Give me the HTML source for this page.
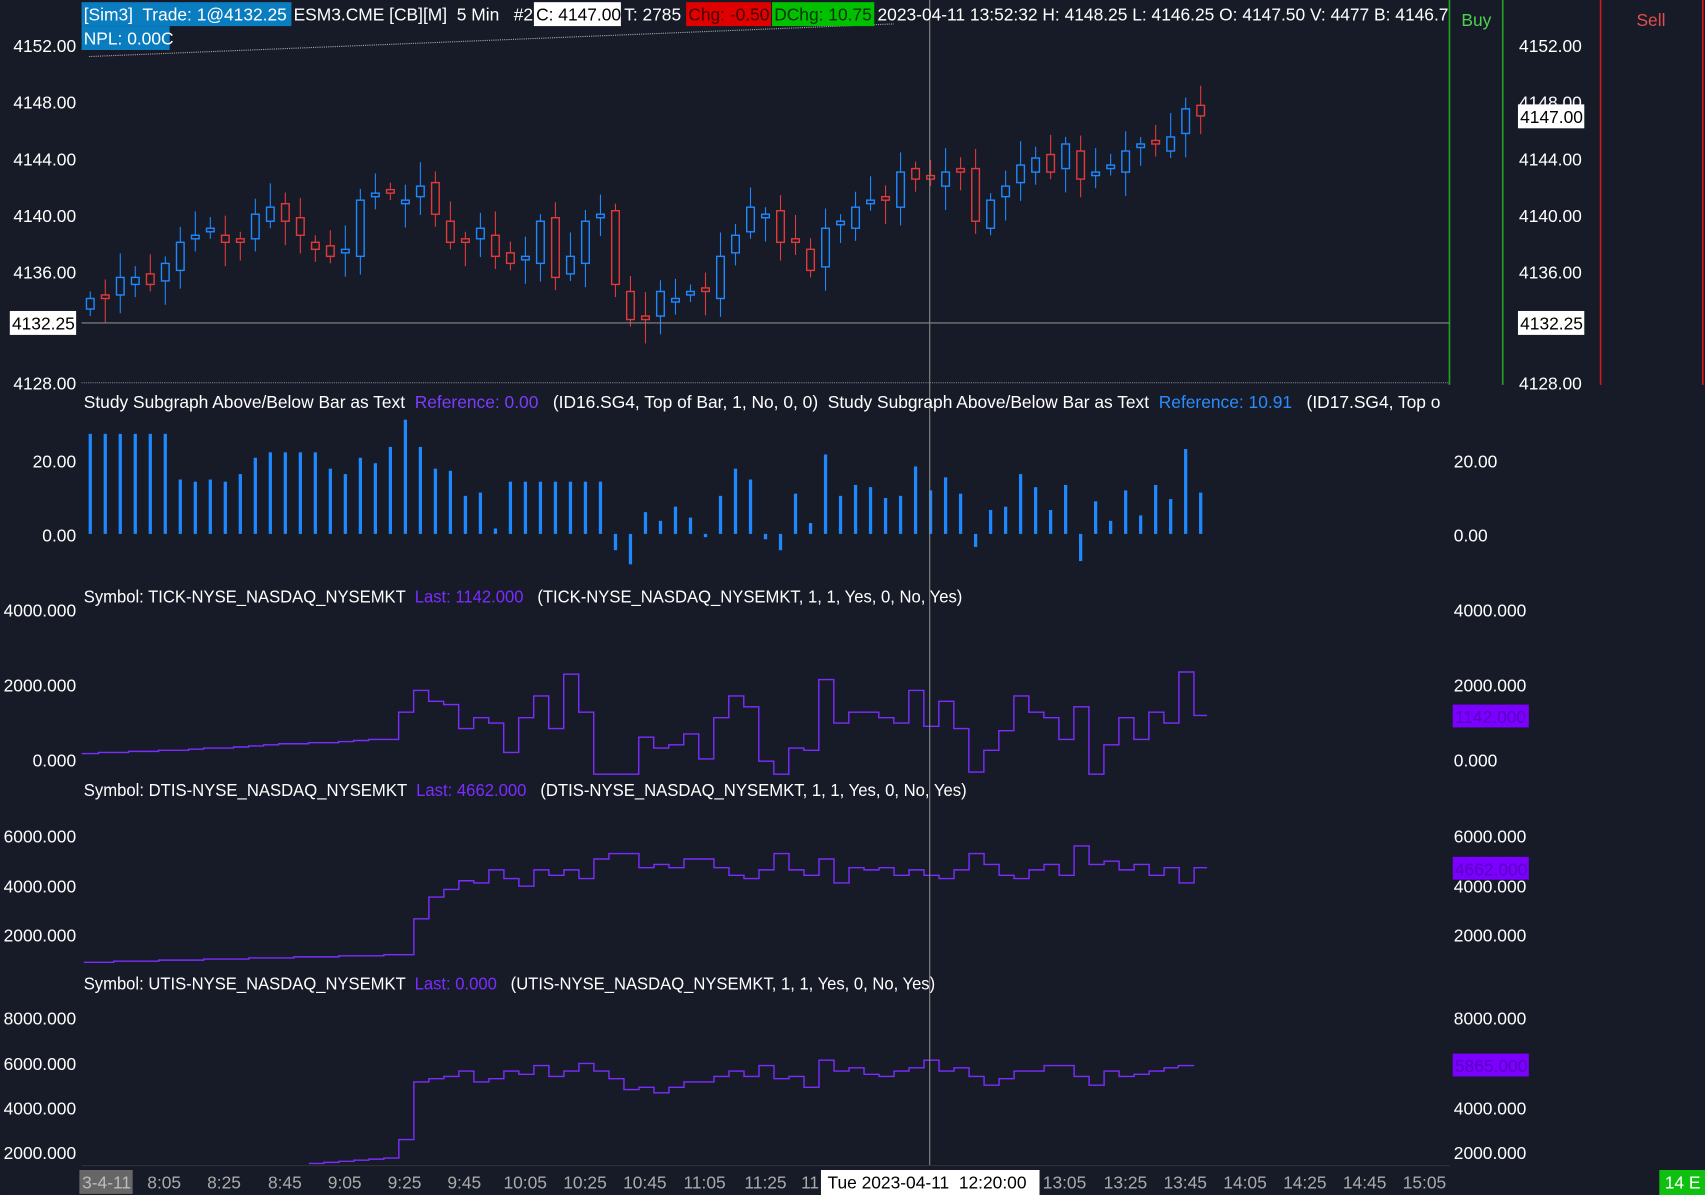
<!DOCTYPE html>
<html><head><meta charset="utf-8"><style>
html,body{margin:0;padding:0;background:#171b27;overflow:hidden}
svg{display:block}
text{font-family:"Liberation Sans",sans-serif;font-size:16px;fill:#fff}
.p{white-space:pre}
</style></head><body>
<svg id="s" width="1705" height="1195" viewBox="0 0 1568 1099" xmlns="http://www.w3.org/2000/svg">
<rect width="1568" height="1099" fill="#171b27"/>
<defs><clipPath id="cp"><rect x="75" y="0" width="1258" height="1072"/></clipPath></defs>
<g id="g" clip-path="url(#cp)"></g>
<line x1="75" y1="352" x2="1333" y2="352" stroke="#888" stroke-dasharray="1 1"/>
<line x1="1333" y1="0" x2="1333" y2="354" stroke="#1fa31f" stroke-width="1.5"/>
<line x1="1382" y1="0" x2="1382" y2="354" stroke="#1fa31f" stroke-width="1.5"/>
<line x1="1472" y1="0" x2="1472" y2="354" stroke="#d01a1a" stroke-width="1.5"/>
<line x1="1566" y1="0" x2="1566" y2="354" stroke="#d01a1a" stroke-width="1.5"/>
<line x1="75" y1="297" x2="1333" y2="297" stroke="#888"/>
<line x1="855" y1="0" x2="855" y2="1072" stroke="#888"/>
<line x1="82" y1="52" x2="822" y2="22" stroke="#aaa" stroke-dasharray="1 1"/>
<rect x="75" y="2" width="193" height="22" fill="#0a7cc0"/>
<rect x="75" y="24" width="81" height="22" fill="#0a7cc0"/>
<text x="77" y="19" class="p">[Sim3]  Trade: 1@4132.25</text>
<text x="270" y="19" class="p">ESM3.CME [CB][M]  5 Min   #2</text>
<rect x="491" y="2" width="80" height="22" fill="#fff"/>
<text x="493" y="19" style="fill:#000">C: 4147.00</text>
<text x="574" y="19">T: 2785</text>
<rect x="631" y="2" width="78" height="22" fill="#e00000"/>
<text x="633" y="19" style="fill:#400">Chg: -0.50</text>
<rect x="710" y="2" width="94" height="22" fill="#00c000"/>
<text x="712" y="19" style="fill:#030">DChg: 10.75</text>
<text x="807" y="19">2023-04-11 13:52:32 H: 4148.25 L: 4146.25 O: 4147.50 V: 4477 B: 4146.7</text>
<text x="77" y="41">NPL: 0.00C</text>
<text x="1344" y="24" style="fill:#4fd04f">Buy</text>
<text x="1505" y="24" style="fill:#e05050">Sell</text>
<g text-anchor="end">
<text x="70" y="48">4152.00</text><text x="70" y="100">4148.00</text><text x="70" y="152">4144.00</text>
<text x="70" y="204">4140.00</text><text x="70" y="256">4136.00</text><text x="70" y="358">4128.00</text>
</g>
<rect x="9" y="286" width="61" height="22" fill="#fff"/><text x="11" y="303" style="fill:#000">4132.25</text>
<text x="1397" y="48">4152.00</text><text x="1397" y="100">4148.00</text>
<rect x="1396" y="96" width="61" height="22" fill="#fff"/><text x="1398" y="113" style="fill:#000">4147.00</text>
<text x="1397" y="152">4144.00</text><text x="1397" y="204">4140.00</text><text x="1397" y="256">4136.00</text>
<rect x="1396" y="286" width="61" height="22" fill="#fff"/><text x="1398" y="303" style="fill:#000">4132.25</text>
<text x="1397" y="358">4128.00</text>
<text x="77" y="375" class="p">Study Subgraph Above/Below Bar as Text  <tspan style="fill:#7b3cff">Reference: 0.00</tspan>   (ID16.SG4, Top of Bar, 1, No, 0, 0)  Study Subgraph Above/Below Bar as Text  <tspan style="fill:#2a8cff">Reference: 10.91</tspan>   (ID17.SG4, Top o</text>
<g text-anchor="end"><text x="70" y="430">20.00</text><text x="70" y="498">0.00</text></g>
<text x="1337" y="430">20.00</text><text x="1337" y="498">0.00</text>
<text x="77" y="554" class="p" textLength="808" lengthAdjust="spacingAndGlyphs">Symbol: TICK-NYSE_NASDAQ_NYSEMKT  <tspan style="fill:#7b2cff">Last: 1142.000</tspan>   (TICK-NYSE_NASDAQ_NYSEMKT, 1, 1, Yes, 0, No, Yes)</text>
<g text-anchor="end"><text x="70" y="567">4000.000</text><text x="70" y="636">2000.000</text><text x="70" y="705">0.000</text></g>
<text x="1337" y="567">4000.000</text><text x="1337" y="636">2000.000</text><text x="1337" y="705">0.000</text>
<rect x="1336" y="648" width="70" height="21" fill="#7b00ff"/><text x="1338" y="665" style="fill:#5a00c0">1142.000</text>
<text x="77" y="732" class="p" textLength="812" lengthAdjust="spacingAndGlyphs">Symbol: DTIS-NYSE_NASDAQ_NYSEMKT  <tspan style="fill:#7b2cff">Last: 4662.000</tspan>   (DTIS-NYSE_NASDAQ_NYSEMKT, 1, 1, Yes, 0, No, Yes)</text>
<g text-anchor="end"><text x="70" y="775">6000.000</text><text x="70" y="821">4000.000</text><text x="70" y="866">2000.000</text></g>
<text x="1337" y="775">6000.000</text><text x="1337" y="821">4000.000</text><text x="1337" y="866">2000.000</text>
<rect x="1336" y="788" width="70" height="21" fill="#7b00ff"/><text x="1338" y="805" style="fill:#5a00c0">4662.000</text>
<text x="77" y="910" class="p" textLength="783" lengthAdjust="spacingAndGlyphs">Symbol: UTIS-NYSE_NASDAQ_NYSEMKT  <tspan style="fill:#7b2cff">Last: 0.000</tspan>   (UTIS-NYSE_NASDAQ_NYSEMKT, 1, 1, Yes, 0, No, Yes)</text>
<g text-anchor="end"><text x="70" y="942">8000.000</text><text x="70" y="984">6000.000</text><text x="70" y="1025">4000.000</text><text x="70" y="1066">2000.000</text></g>
<text x="1337" y="942">8000.000</text><text x="1337" y="1025">4000.000</text><text x="1337" y="1066">2000.000</text>
<rect x="1336" y="969" width="70" height="21" fill="#7b00ff"/><text x="1338" y="986" style="fill:#5a00c0">5865.000</text>
<line x1="75" y1="1072" x2="1333" y2="1072" stroke="#333"/>
<rect x="73" y="1076" width="49" height="22" fill="#666"/>
<g text-anchor="middle">
<text x="98" y="1093" style="fill:#bbb">3-4-11</text>
<text x="151" y="1093" style="fill:#aaa">8:05</text><text x="206" y="1093" style="fill:#aaa">8:25</text><text x="262" y="1093" style="fill:#aaa">8:45</text>
<text x="317" y="1093" style="fill:#aaa">9:05</text><text x="372" y="1093" style="fill:#aaa">9:25</text><text x="427" y="1093" style="fill:#aaa">9:45</text>
<text x="483" y="1093" style="fill:#aaa">10:05</text><text x="538" y="1093" style="fill:#aaa">10:25</text><text x="593" y="1093" style="fill:#aaa">10:45</text>
<text x="648" y="1093" style="fill:#aaa">11:05</text><text x="704" y="1093" style="fill:#aaa">11:25</text><text x="745" y="1093" style="fill:#aaa">11</text>
<text x="979" y="1093" style="fill:#aaa">13:05</text><text x="1035" y="1093" style="fill:#aaa">13:25</text><text x="1090" y="1093" style="fill:#aaa">13:45</text>
<text x="1145" y="1093" style="fill:#aaa">14:05</text><text x="1200" y="1093" style="fill:#aaa">14:25</text><text x="1255" y="1093" style="fill:#aaa">14:45</text>
<text x="1310" y="1093" style="fill:#aaa">15:05</text>
</g>
<rect x="755" y="1076" width="201" height="23" fill="#fff"/>
<text x="761" y="1093" class="p" style="fill:#000">Tue 2023-04-11  12:20:00</text>
<rect x="1526" y="1076" width="42" height="23" fill="#10c010"/>
<text x="1531" y="1093" style="fill:#fff">14 E</text>
</svg>
<script>
var g=document.getElementById('g'),NS='http://www.w3.org/2000/svg';
function el(t,a){var e=document.createElementNS(NS,t);for(var k in a)e.setAttribute(k,a[k]);g.appendChild(e);return e;}
function X(i){return 83+i*13.8;}
function Y(p){return 42+(4152-p)*12.917;}
var c=[4134,4134,4135.5,4135.5,4135,4136.5,4138,4138.5,4139,4138,4138,4140,4140.5,4139.5,4138.5,4137.5,4137,4137.5,4141,4141.5,4141.5,4141,4142,4140,4138,4138,4139,4137,4136.5,4137,4139.5,4135.5,4137,4139.5,4140,4135,4132.5,4132.5,4134.5,4134,4134.5,4134.5,4137,4138.5,4140.5,4140,4138,4138,4136,4139,4139.5,4140.5,4141,4141,4143,4142.5,4142.5,4143,4143,4139.5,4141,4142,4143.5,4144,4143,4145,4142.5,4143,4143.5,4144.5,4145,4145,4145.5,4147.5,4147];
var o=4133.25;
for(var i=0;i<c.length;i++){var op=i?c[i-1]+(i%3==0?-0.5:0.25):o,cl=c[i];
 if(Math.abs(op-cl)<0.25)op=cl-0.25;
 var up=cl>op,col=up?'#1e88ff':'#e03a3a';
 var hi=Math.max(op,cl)+0.5+(i*7%5)*0.3,lo=Math.min(op,cl)-0.5-(i*3%4)*0.4;
 el('line',{x1:X(i),x2:X(i),y1:Y(hi),y2:Y(lo),stroke:col,'stroke-width':1});
 var t=Y(Math.max(op,cl)),b=Y(Math.min(op,cl));
 el('rect',{x:X(i)-3.5,y:t,width:7,height:Math.max(2,b-t),fill:'#171b27',stroke:col,'stroke-width':1.3});}
var h=[92,92,92,92,92,92,50,48,50,48,55,70,75,75,75,75,60,55,70,65,80,105,80,60,58,35,38,5,48,48,48,48,48,48,48,-15,-28,20,12,25,15,-3,35,60,50,-5,-15,37,10,73,35,45,43,33,35,62,40,52,37,-12,22,25,55,43,22,45,-25,30,12,40,17,45,32,78,38];
for(var i=0;i<h.length;i++){var v=h[i];el('rect',{x:X(i)-1.5,y:v>0?491-v:491,width:3,height:Math.abs(v)||1,fill:'#1e88ff'});}
function step(ys,x0,col,xmax){var d='M'+x0+' '+ys[0];for(var i=0;i<ys.length;i++){var x=x0+i*13.8;var x2=Math.min(x+13.8,xmax);d+=' L'+x+' '+ys[i]+' L'+x2+' '+ys[i];}el('path',{d:d,fill:'none',stroke:col,'stroke-width':1.3});}
var tk=[693,693,692,692,691,691,690,690,689,688,688,687,686,685,684,684,683,683,682,681,680,680,655,635,645,648,670,660,665,692,660,640,670,620,655,712,712,712,678,688,685,675,698,660,640,650,700,712,688,690,625,665,655,655,660,665,635,668,645,670,710,690,672,640,655,660,680,650,712,685,660,680,655,665,618,658];
step(tk,63,'#7b2cff',1110);
var dt=[885,885,884,884,884,883,883,883,882,882,882,881,881,881,880,880,880,879,879,879,878,878,845,825,818,810,812,800,808,815,800,805,800,808,790,785,785,798,795,798,790,790,798,805,808,800,785,800,805,790,812,798,800,798,805,800,805,808,800,785,795,805,808,800,795,805,778,795,792,800,795,805,798,812,798];
step(dt,77,'#7b2cff',1110);
var ut=[1070,1069,1068,1067,1066,1065,1048,995,992,990,985,995,992,985,988,980,990,985,978,985,992,1002,1000,1005,1000,995,995,990,985,990,980,992,990,1000,975,985,982,988,990,985,982,975,985,982,990,998,992,985,985,980,980,990,998,985,990,988,985,982,980,980];
step(ut,284,'#7b2cff',1083);
</script>
</body></html>
